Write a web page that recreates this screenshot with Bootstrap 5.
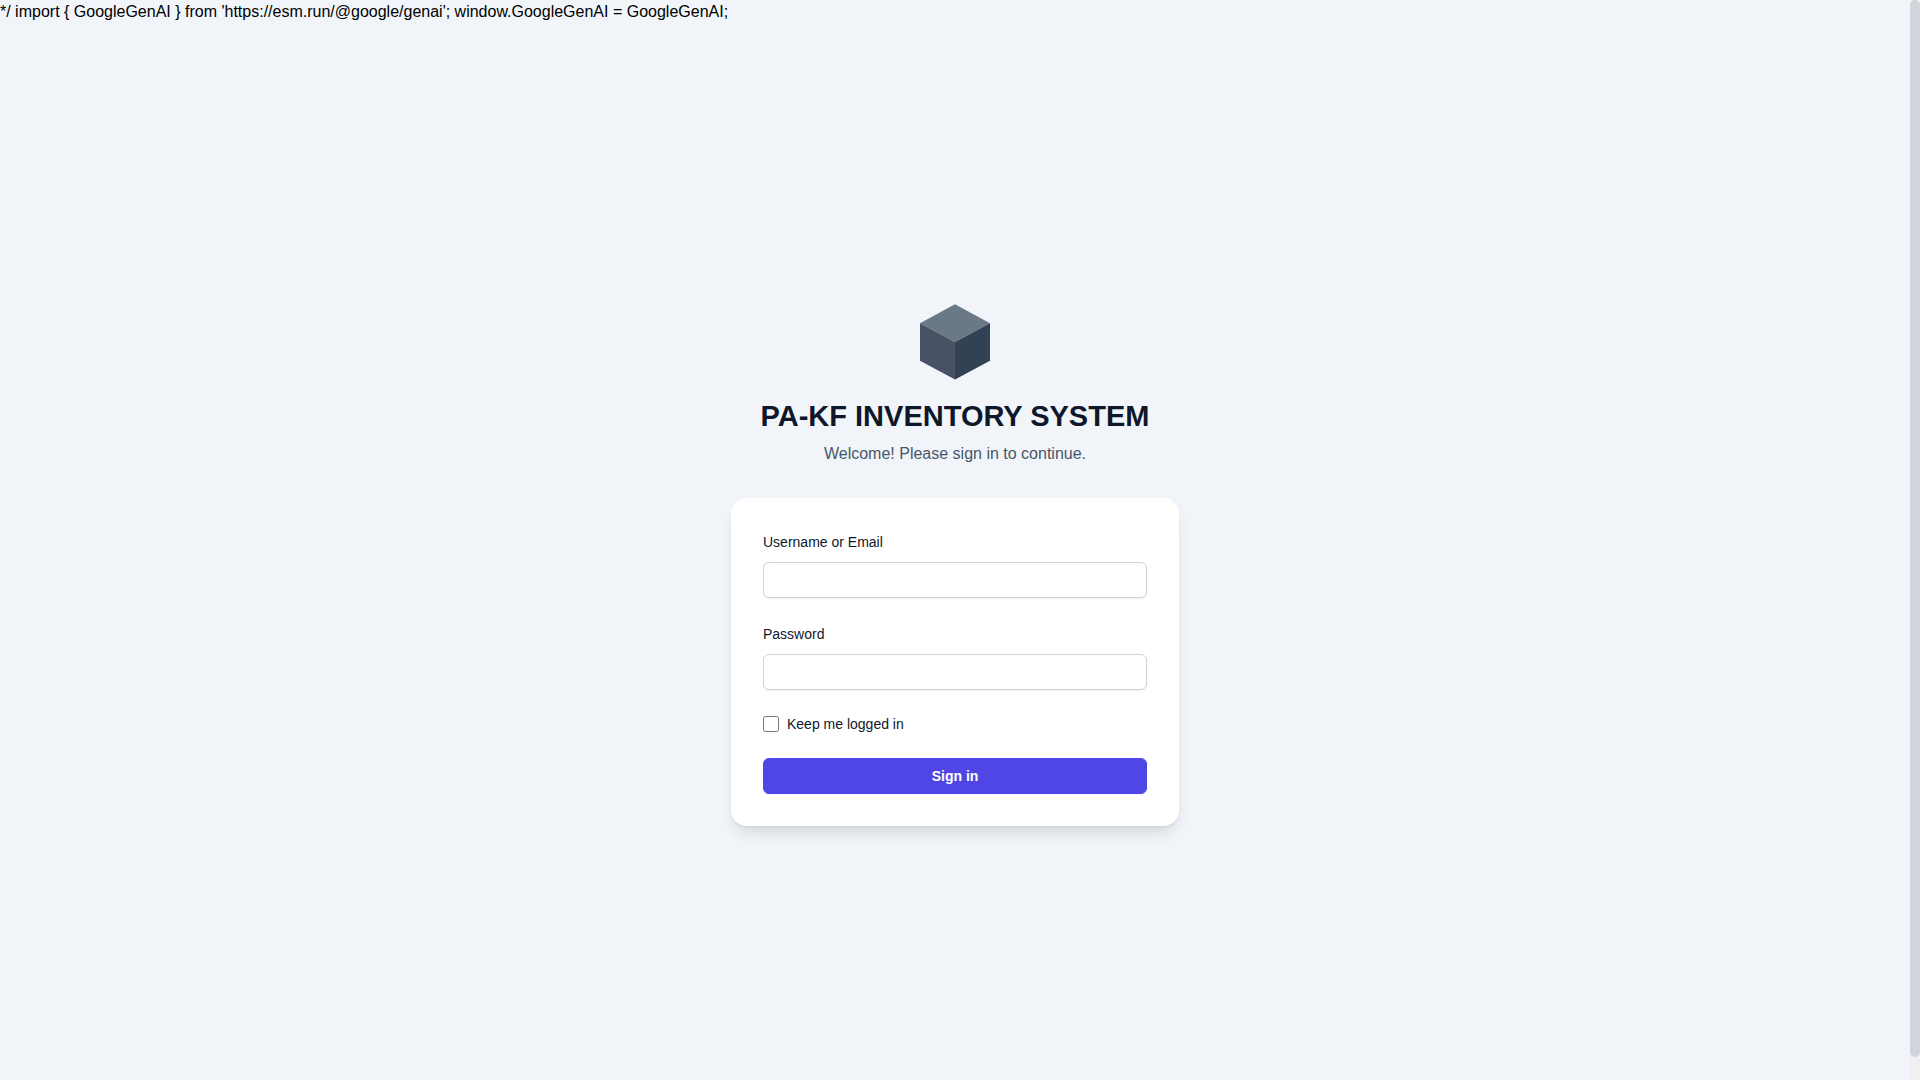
<!DOCTYPE html>
<html lang="en">
<head>
<meta charset="utf-8">
<meta name="viewport" content="width=device-width, initial-scale=1">
<title>PA-KF Inventory System</title>
<link href="https://cdn.jsdelivr.net/npm/bootstrap@5.3.0/dist/css/bootstrap.min.css" rel="stylesheet">
<style>
  html { scrollbar-width: none; }
  body {
    background: #f1f5f9;
    color: #000;
    font-family: "Liberation Sans", Arial, sans-serif;
    font-size: 16px;
    line-height: 24px;
  }
  .scroll-track { width: 10px; background: #f1f1f1; }
  .scroll-thumb { height: calc(100% - 23px); background: #d1d5db; border-radius: 5px; }
  .login-box { width: 100%; max-width: 448px; }
  .login-logo { width: 80px; height: 80px; }
  .login-title { color: #0f172a; font-size: 29px; line-height: 36px; }
  .login-intro { color: #475569; }
  .login-card {
    border-radius: 16px;
    padding: 32px;
    box-shadow: 0 10px 15px -3px rgba(0, 0, 0, .1), 0 4px 6px -4px rgba(0, 0, 0, .1);
  }
  .login-card label { color: #0f172a; font-size: 14px; }
  .login-card .form-control {
    height: 36px;
    border-color: #cbd5e1;
    border-radius: 6px;
    box-shadow: 0 1px 2px rgba(0, 0, 0, .05);
  }
  .remember-row { line-height: 20px; }
  .remember-row input { width: 16px; height: 16px; }
  .btn-signin {
    --bs-btn-bg: #4f46e5;
    --bs-btn-border-color: #4f46e5;
    --bs-btn-color: #fff;
    --bs-btn-hover-bg: #4338ca;
    --bs-btn-hover-color: #fff;
    --bs-btn-border-radius: 6px;
    --bs-btn-font-size: 14px;
    --bs-btn-line-height: 22px;
    box-shadow: 0 1px 2px rgba(0, 0, 0, .05);
  }
</style>
</head>
<body class="d-flex align-items-start">
<div class="flex-grow-1">
  <div>*/ import { GoogleGenAI } from 'https://esm.run/@google/genai'; window.GoogleGenAI = GoogleGenAI;</div>
  <main class="min-vh-100 d-flex align-items-center justify-content-center">
    <div class="login-box">
      <header class="text-center mb-4 pb-2">
        <svg class="login-logo d-block mx-auto mb-3" viewBox="0 0 80 80" aria-hidden="true">
          <path fill="#6b7886" d="M40 2.3 75 21.2 40 40 5 21.2Z"/>
          <path fill="#475364" d="M5 21.2 40 40V77.5L5 58.7Z"/>
          <path fill="#334155" d="M75 21.2 40 40V77.5L75 58.7Z"/>
        </svg>
        <h1 class="login-title fw-bold mb-2">PA-KF INVENTORY SYSTEM</h1>
        <p class="login-intro mb-0">Welcome! Please sign in to continue.</p>
      </header>
      <form class="login-card bg-white d-flex flex-column gap-4">
        <div>
          <label class="d-block mb-2" for="username">Username or Email</label>
          <input class="form-control" type="text" id="username" autocomplete="username">
        </div>
        <div>
          <label class="d-block mb-2" for="password">Password</label>
          <input class="form-control" type="password" id="password" autocomplete="current-password">
        </div>
        <div class="remember-row d-flex align-items-center gap-2">
          <input class="m-0" type="checkbox" id="remember">
          <label for="remember">Keep me logged in</label>
        </div>
        <button class="btn btn-signin fw-bold w-100" type="submit">Sign in</button>
      </form>
    </div>
  </main>
</div>
<div class="scroll-track sticky-top vh-100 flex-shrink-0" aria-hidden="true">
  <div class="scroll-thumb"></div>
</div>
<script src="https://cdn.jsdelivr.net/npm/bootstrap@5.3.0/dist/js/bootstrap.bundle.min.js"></script>
</body>
</html>
